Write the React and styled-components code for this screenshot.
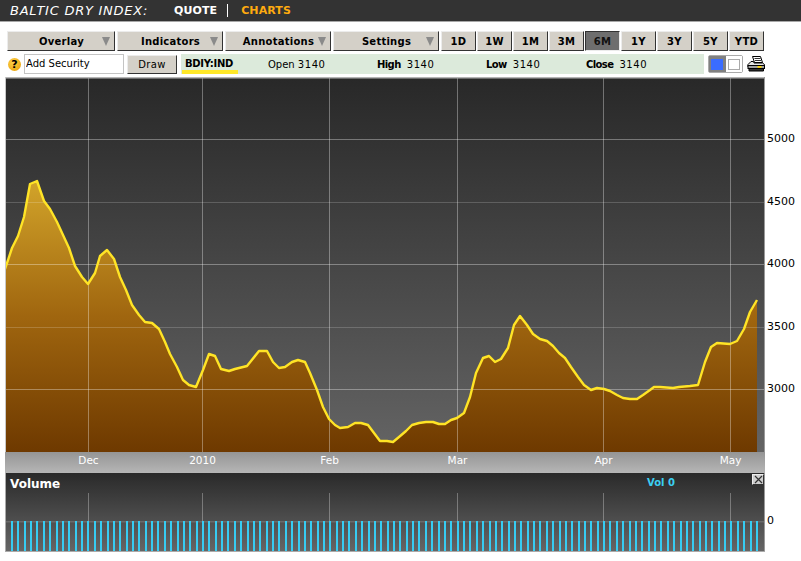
import React from "react";
import styled, { createGlobalStyle } from "styled-components";

const GlobalStyle = createGlobalStyle`
  html, body {
    margin: 0;
    padding: 0;
    background: #fff;
  }
  body {
    width: 801px;
    height: 561px;
    overflow: hidden;
    font-family: "DejaVu Sans", Verdana, sans-serif;
  }
`;

const LINE = [
  [5, 269], [12, 248], [18, 236], [24, 217], [30, 184], [37, 181], [44, 201], [50, 209], [57, 222], [63, 235],
  [69, 248], [75, 266], [82, 277], [88, 284], [95, 273], [100, 256], [107, 250], [114, 259], [120, 277], [126, 290],
  [132, 305], [139, 315], [145, 322], [152, 323], [159, 329], [165, 342], [170, 354], [177, 367], [183, 380], [189, 385],
  [196, 387], [203, 370], [209, 354], [215, 356], [221, 369], [229, 371], [235, 369], [247, 366], [259, 351], [267, 351],
  [273, 362], [279, 368], [285, 367], [292, 362], [298, 360], [305, 362], [310, 373], [317, 390], [323, 407], [329, 419],
  [335, 425], [340, 428], [348, 427], [355, 423], [361, 423], [368, 425], [374, 433], [380, 441], [387, 441], [393, 442],
  [399, 437], [406, 431], [412, 425], [419, 423], [426, 422], [433, 422], [439, 424], [445, 424], [451, 420], [457, 418],
  [464, 413], [470, 397], [476, 373], [483, 358], [489, 356], [495, 362], [501, 359], [508, 348], [514, 325], [520, 316],
  [527, 325], [533, 334], [540, 339], [547, 341], [553, 346], [559, 353], [565, 358], [571, 367], [578, 377], [584, 385],
  [591, 390], [597, 388], [604, 389], [610, 391], [617, 395], [623, 398], [630, 399], [637, 399], [643, 395], [650, 390],
  [654, 387], [660, 387], [673, 388], [679, 387], [690, 386], [698, 385], [705, 362], [711, 347], [717, 343], [730, 344],
  [737, 341], [744, 329], [750, 312], [757, 300],
];

const PRICE_TICKS = [
  { label: "5000", y: 139, major: true },
  { label: "4500", y: 202 },
  { label: "4000", y: 264, major: true },
  { label: "3500", y: 327 },
  { label: "3000", y: 389, major: true },
];

const TIME_TICKS = [
  { label: "Dec", x: 88 },
  { label: "2010", x: 202 },
  { label: "Feb", x: 329 },
  { label: "Mar", x: 457 },
  { label: "Apr", x: 603 },
  { label: "May", x: 730 },
];

const MENUS = [
  { label: "Overlay", width: 108 },
  { label: "Indicators", width: 106 },
  { label: "Annotations", width: 106 },
  { label: "Settings", width: 106 },
];

const PERIODS = ["1D", "1W", "1M", "3M", "6M", "1Y", "3Y", "5Y", "YTD"];

const STATS = [
  { label: "Open", value: "3140", width: 109 },
  { label: "High", value: "3140", width: 109, bold: true },
  { label: "Low", value: "3140", width: 100, bold: true },
  { label: "Close", value: "3140", width: 100, bold: true },
];

const linePoints = LINE.map(([x, y]) => `${x},${y}`).join(" ");
const areaPoints = `5,452 ${linePoints} 757,452`;
const volumeBars = Array.from({ length: 118 }, (_, i) => Math.round(11 + i * 6.367));

const App = () => (
  <Page>
    <GlobalStyle />
    <Header>
      <Title>BALTIC DRY INDEX:</Title>
      <NavLink>QUOTE</NavLink>
      <NavLink $active>CHARTS</NavLink>
    </Header>

    <Toolbar>
      {MENUS.map((m) => (
        <MenuButton key={m.label} $width={m.width}>
          <span />
          <span>{m.label}</span>
          <Arrow />
        </MenuButton>
      ))}
      <Periods>
        {PERIODS.map((p) => (
          <PeriodButton key={p} $active={p === "6M"}>{p}</PeriodButton>
        ))}
      </Periods>
    </Toolbar>

    <InfoRow>
      <HelpIcon>?</HelpIcon>
      <SecurityInput readOnly value="Add Security" />
      <DrawButton>Draw</DrawButton>
      <QuoteStrip>
        <Ticker>BDIY:IND</Ticker>
        {STATS.map((s) => (
          <Stat key={s.label} $width={s.width}>
            <StatLabel $bold={s.bold}>{s.label}</StatLabel>
            {s.value}
          </Stat>
        ))}
      </QuoteStrip>
      <ColorToggle>
        <ColorCell $on><ColorSwatch $color="#3a6cff" /></ColorCell>
        <ColorCell><ColorSwatch $color="#fff" /></ColorCell>
      </ColorToggle>
      <PrinterIcon />
    </InfoRow>

    <ChartPanel>
      <PlotSvg width="796" height="375" viewBox="5 77 796 375">
        <defs>
          <linearGradient id="plotBg" x1="0" y1="0" x2="0" y2="1">
            <stop offset="0" stopColor="#282828" />
            <stop offset="1" stopColor="#646464" />
          </linearGradient>
          <linearGradient id="areaFill" gradientUnits="userSpaceOnUse" x1="0" y1="180" x2="0" y2="452">
            <stop offset="0" stopColor="#d2a42a" />
            <stop offset="0.5" stopColor="#a0660f" />
            <stop offset="1" stopColor="#6e3900" />
          </linearGradient>
        </defs>
        <rect x="5" y="77" width="760" height="375" fill="url(#plotBg)" />
        <polygon points={areaPoints} fill="url(#areaFill)" />
        {PRICE_TICKS.map((t) => (
          <line key={t.label} x1="6" x2="764" y1={t.y + 0.5} y2={t.y + 0.5} stroke="#fff" strokeOpacity={t.major ? 0.34 : 0.18} />
        ))}
        {TIME_TICKS.map((t) => (
          <line key={t.label} x1={t.x + 0.5} x2={t.x + 0.5} y1="78" y2="452" stroke="#fff" strokeOpacity="0.34" />
        ))}
        <polyline points={linePoints} fill="none" stroke="#ffe426" strokeWidth="2.4" strokeLinejoin="round" />
        <rect x="5" y="77" width="760" height="1.5" fill="#b4b4b4" />
        <rect x="5" y="77" width="1" height="375" fill="#c8c8c8" />
        <rect x="764" y="77" width="1" height="375" fill="#999" />
        {PRICE_TICKS.map((t) => (
          <AxisText key={t.label} x="767" y={t.y + 3}>{t.label}</AxisText>
        ))}
      </PlotSvg>

      <TimeAxis>
        <svg width="760" height="21" viewBox="5 452 760 21">
          {TIME_TICKS.map((t) => (
            <TimeText key={t.label} x={t.x + 0.5} y="464">{t.label}</TimeText>
          ))}
        </svg>
      </TimeAxis>

      <VolumePane>
        <VolumeTitle>Volume</VolumeTitle>
        <VolumeValue>Vol 0</VolumeValue>
        <CloseBox>
          <svg width="9" height="9" viewBox="0 0 9 9">
            <path d="M1 1l7 7M8 1L1 8" stroke="#333" strokeWidth="1.2" />
          </svg>
        </CloseBox>
        <PlotSvg width="796" height="79" viewBox="5 473 796 79">
          <defs>
            <linearGradient id="volBg" x1="0" y1="0" x2="0" y2="1">
              <stop offset="0" stopColor="#2a2a2a" />
              <stop offset="1" stopColor="#666" />
            </linearGradient>
          </defs>
          <rect x="5" y="473" width="760" height="79" fill="url(#volBg)" />
          {TIME_TICKS.map((t) => (
            <line key={t.label} x1={t.x + 0.5} x2={t.x + 0.5} y1="493" y2="522" stroke="#fff" strokeOpacity="0.3" />
          ))}
          <rect x="6" y="521" width="758" height="1.5" fill="#6a6a6a" />
          {volumeBars.map((x) => (
            <rect key={x} x={x} y="521" width="2" height="31" fill="#36ccf2" />
          ))}
          <rect x="5" y="473" width="1" height="79" fill="#aaa" />
          <rect x="764" y="473" width="1" height="79" fill="#999" />
          <rect x="5" y="551" width="760" height="1" fill="#aaa" />
          <AxisText x="767" y="524">0</AxisText>
        </PlotSvg>
      </VolumePane>
    </ChartPanel>
  </Page>
);

const PrinterIcon = () => (
  <PrinterSvg width="18" height="18" viewBox="0 0 18 18">
    <path d="M5.5 1.5h8l2 6h-8z" fill="#fff" stroke="#000" />
    <path d="M7.5 3.5h6M8 5.5h6" stroke="#000" strokeWidth="0.8" />
    <path d="M1 12V9.5l3-3h2.5l.5 1.5h8.5l2 1.5V12z" fill="#e6e6e6" stroke="#000" />
    <rect x="1" y="10.5" width="16.5" height="3" fill="#a0a0a0" stroke="#000" />
    <rect x="10.5" y="11" width="4" height="1.8" fill="#ffd800" />
    <path d="M2 13.5h14.5v2.5H2z" fill="#333" stroke="#000" />
  </PrinterSvg>
);

const Page = styled.div`
  width: 801px;
  height: 561px;
  display: flex;
  flex-direction: column;
  background: #fff;
`;

const Header = styled.header`
  height: 21px;
  display: flex;
  align-items: center;
  padding-left: 10px;
  background: #333;
  border-bottom: 1px solid #a8a8a8;
`;

const Title = styled.h1`
  margin: 0 24px 0 0;
  width: 140px;
  font-size: 13px;
  font-weight: normal;
  font-style: italic;
  letter-spacing: 0.75px;
  white-space: nowrap;
  color: #fff;
`;

const NavLink = styled.a`
  font-size: 11px;
  font-weight: bold;
  letter-spacing: 0.1px;
  color: ${(p) => (p.$active ? "#ffab0f" : "#fff")};
  ${(p) =>
    p.$active
      ? `
    margin-left: 10px;
    padding-left: 13px;
    border-left: 1px solid #fff;
    line-height: 13px;
  `
      : ""}
`;

const Toolbar = styled.div`
  display: flex;
  gap: 2px;
  height: 20px;
  margin: 9px 0 0 7px;
`;

const raised = `
  box-sizing: border-box;
  background: #d4d0c8;
  border-style: solid;
  border-width: 1px;
  border-color: #ececec #333 #333 #ececec;
  color: #000;
`;

const MenuButton = styled.div`
  ${raised}
  width: ${(p) => p.$width}px;
  display: grid;
  grid-template-columns: 1fr auto 1fr;
  align-items: center;
  padding: 0 4px 0 5px;
  font-size: 10px;
  font-weight: bold;
  letter-spacing: 0.25px;
`;

const Arrow = styled.i`
  justify-self: end;
  width: 0;
  height: 0;
  border-left: 4.5px solid transparent;
  border-right: 4.5px solid transparent;
  border-top: 9px solid #8a8a8a;
`;

const Periods = styled.div`
  display: flex;
  gap: 1px;
`;

const PeriodButton = styled.div`
  ${raised}
  width: 35px;
  display: flex;
  align-items: center;
  justify-content: center;
  font-size: 10px;
  font-weight: bold;
  letter-spacing: 0.3px;
  ${(p) =>
    p.$active
      ? `
    background: #6e6e6e;
    border-color: #333 #ececec #ececec #333;
    color: #111;
  `
      : ""}
`;

const InfoRow = styled.div`
  display: flex;
  align-items: center;
  height: 20px;
  margin: 3px 0 0 8px;
`;

const HelpIcon = styled.span`
  width: 13px;
  height: 13px;
  display: flex;
  align-items: center;
  justify-content: center;
  margin-right: 3px;
  border-radius: 50%;
  background: radial-gradient(circle at 40% 35%, #ffd24a, #e59a00);
  font-size: 11px;
  font-weight: bold;
  color: #000;
`;

const SecurityInput = styled.input`
  box-sizing: border-box;
  width: 100px;
  height: 20px;
  padding: 0 0 1px 1px;
  border: 1px solid #c4c4c4;
  outline: none;
  font-family: "DejaVu Sans", sans-serif;
  font-size: 10px;
  color: #000;
`;

const DrawButton = styled.div`
  ${raised}
  width: 50px;
  height: 19px;
  margin: 1px 4px 0 3px;
  display: flex;
  align-items: center;
  justify-content: center;
  font-size: 10px;
  letter-spacing: 0.3px;
`;

const QuoteStrip = styled.div`
  width: 523px;
  height: 20px;
  display: flex;
  align-items: center;
  background: #dceadb;
  font-size: 10px;
  letter-spacing: 0.6px;
  color: #000;
`;

const Ticker = styled.div`
  box-sizing: border-box;
  width: 56px;
  height: 19px;
  margin: 0 30px 0 1px;
  padding: 3px 0 0 3px;
  border-bottom: 4px solid #ffe82a;
  font-weight: bold;
  letter-spacing: -0.3px;
  white-space: nowrap;
`;

const Stat = styled.div`
  width: ${(p) => p.$width}px;
  white-space: nowrap;
`;

const StatLabel = styled.span`
  margin-right: ${(p) => (p.$bold ? 6 : 3)}px;
  letter-spacing: ${(p) => (p.$bold ? "-0.6px" : "0")};
  font-weight: ${(p) => (p.$bold ? "bold" : "normal")};
`;

const ColorToggle = styled.div`
  box-sizing: border-box;
  width: 35px;
  height: 18px;
  margin: 0 4px;
  display: flex;
  border: 1px solid #aaa;
  border-radius: 2px;
`;

const ColorCell = styled.div`
  flex: 1;
  display: flex;
  align-items: center;
  justify-content: center;
  background: ${(p) => (p.$on ? "#808080" : "#fff")};
`;

const ColorSwatch = styled.div`
  box-sizing: border-box;
  width: 12px;
  height: 11px;
  background: ${(p) => p.$color};
  border: ${(p) => (p.$color === "#fff" ? "1px solid #aaa" : "none")};
`;

const PrinterSvg = styled.svg`
  flex: none;
`;

const ChartPanel = styled.div`
  margin: 3px 0 0 5px;
  width: 796px;
`;

const PlotSvg = styled.svg`
  display: block;
`;

const AxisText = styled.text`
  font-family: "DejaVu Sans", sans-serif;
  font-size: 11px;
  fill: #000;
`;

const TimeAxis = styled.div`
  width: 760px;
  height: 21px;
  background: linear-gradient(#959595, #b6b6b6);

  svg {
    display: block;
  }
`;

const TimeText = styled.text`
  font-family: "DejaVu Sans", sans-serif;
  font-size: 10.5px;
  text-anchor: middle;
  fill: #fff;
`;

const VolumePane = styled.div`
  position: relative;
  height: 79px;
`;

const VolumeTitle = styled.div`
  position: absolute;
  left: 5px;
  top: 4px;
  font-size: 12px;
  font-weight: bold;
  color: #fff;
`;

const VolumeValue = styled.div`
  position: absolute;
  left: 642px;
  top: 4px;
  font-size: 10px;
  font-weight: bold;
  color: #3ccff2;
`;

const CloseBox = styled.div`
  position: absolute;
  left: 747px;
  top: 1px;
  box-sizing: border-box;
  width: 12px;
  height: 11px;
  display: flex;
  align-items: center;
  justify-content: center;
  background: #cfcfcf;
  border: 1px solid;
  border-color: #eee #333 #333 #eee;
`;

export default App;
